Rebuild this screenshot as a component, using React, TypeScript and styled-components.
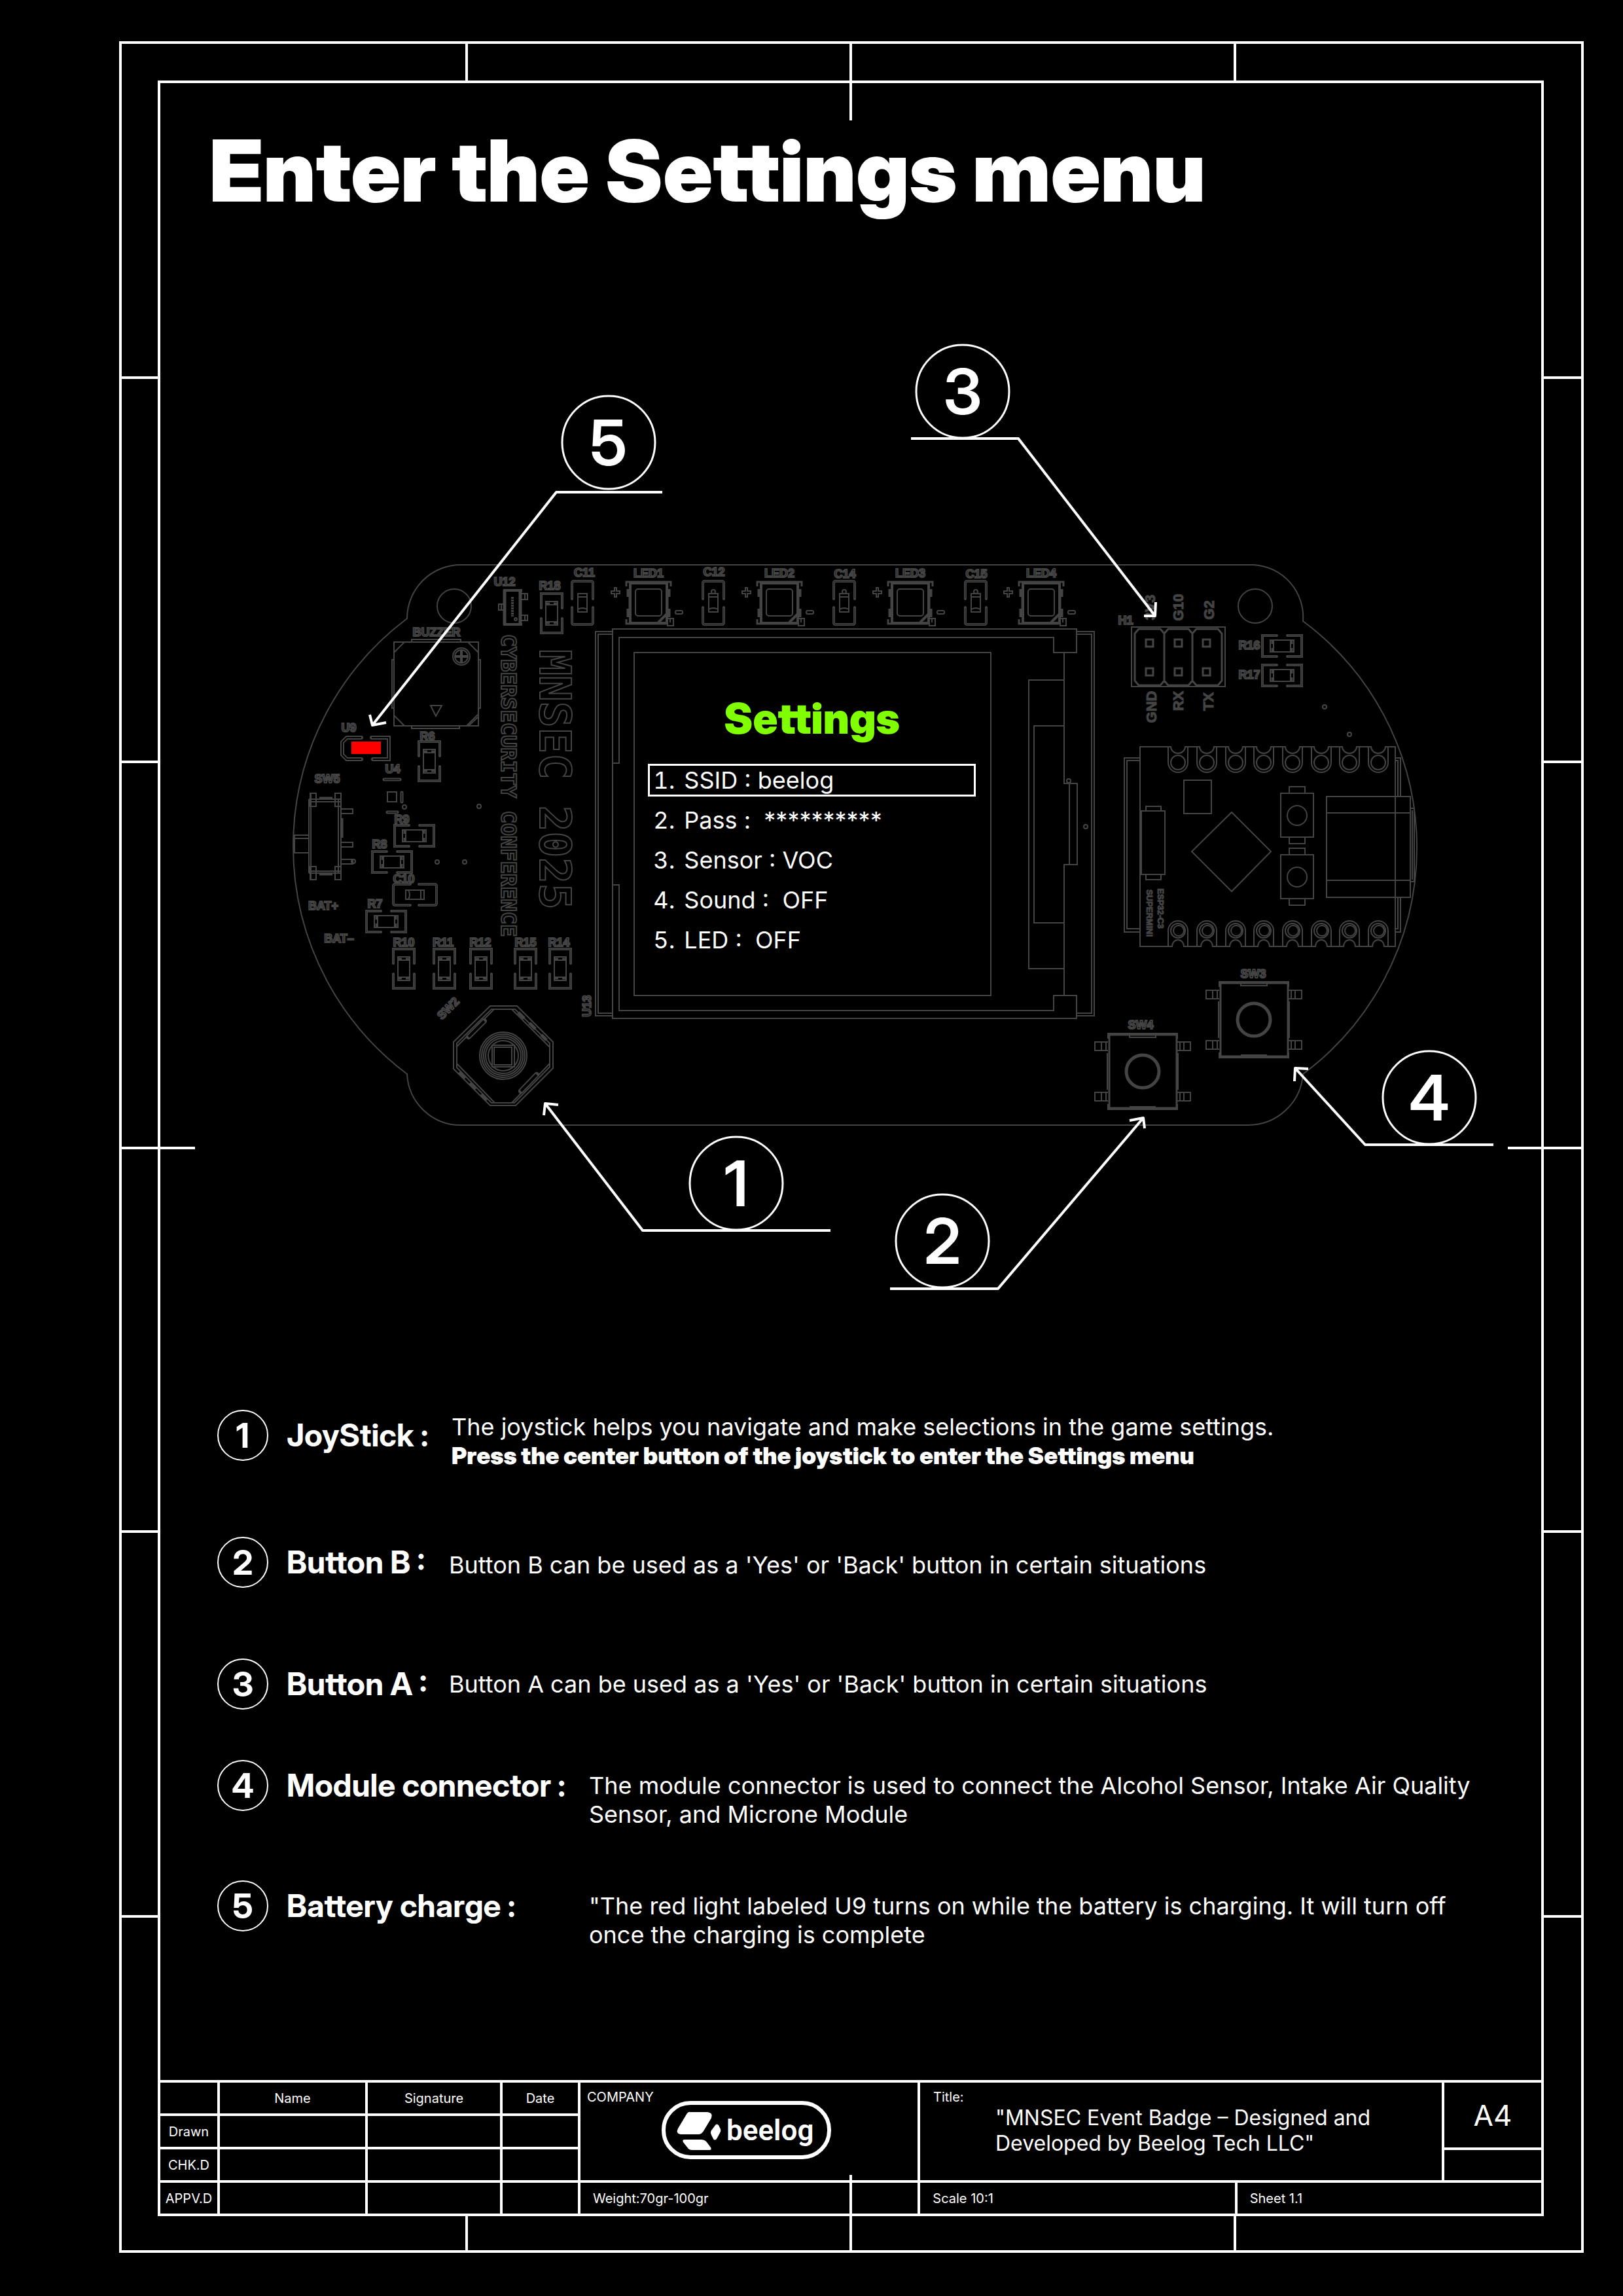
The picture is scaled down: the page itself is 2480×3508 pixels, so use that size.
import React from "react";
import styled, { createGlobalStyle, css } from "styled-components";

const LINE = "#ffffff";
const TRACE = "#444444";
const RULE = 4;
const DISPLAY = `"Inter Display", Inter, "Liberation Sans", sans-serif`;

const GlobalStyle = createGlobalStyle`
  *, *::before, *::after { box-sizing: border-box; }
  body {
    margin: 0;
    background: #000000;
    color: #ffffff;
    font-family: Inter, "Liberation Sans", sans-serif;
  }
  h1, h2, h3, p, ol, figure { margin: 0; padding: 0; }
  ol { list-style: none; }
`;

/* ---------- sheet frame ---------- */

const Sheet = styled.div`
  display: flex;
  min-height: 100vh;
  padding: 63px 60px 67px 182px;
`;

const Frame = styled.div`
  flex: 1;
  min-width: 0;
  display: grid;
  grid-template-columns: 55px minmax(0, 1fr) 57px;
  grid-template-rows: 56px 1fr 52px;
  border: ${RULE}px solid ${LINE};
`;

const HorizontalRuler = styled.div`
  grid-column: 1 / -1;
  display: grid;
  grid-template-columns: 529fr 586fr 587fr 527fr;
`;

const VerticalRuler = styled.div`
  display: grid;
  grid-template-rows: 456fr 587fr 589fr 586fr 588fr 456fr;
`;

type Side = "top" | "right" | "bottom" | "left";

const centreMark: Record<Side, ReturnType<typeof css>> = {
  top: css`top: 0; right: -4px; width: 4px; height: 117px;`,
  bottom: css`bottom: 0; right: -4px; width: 4px; height: 115px;`,
  left: css`left: 0; bottom: -4px; height: 4px; width: 112px;`,
  right: css`right: 0; bottom: -4px; height: 4px; width: 112px;`,
};

const Zone = styled.div<{ $side: Side; $centre?: boolean }>`
  position: relative;
  ${(p) => (p.$side === "top" || p.$side === "bottom" ? "border-right" : "border-bottom")}: ${RULE}px solid ${LINE};
  &:last-child { border: 0; }
  ${(p) =>
    p.$centre &&
    css`
      &::after {
        content: "";
        position: absolute;
        background: ${LINE};
        ${centreMark[p.$side]}
      }
    `}
`;

const Panel = styled.main`
  display: flex;
  flex-direction: column;
  border: ${RULE}px solid ${LINE};
`;

const Heading = styled.h1`
  padding: 56px 60px 0 75px;
  font-family: ${DISPLAY};
  font-size: 130px;
  line-height: 156px;
  font-weight: 900;
`;

/* ---------- board figure ---------- */

const Figure = styled.figure`
  position: relative;
  margin-top: 121px;
`;

const Drawing = styled.svg`
  display: block;
  width: 100%;
  height: auto;
`;

const Screen = styled.section`
  position: absolute;
  left: 34.33%;
  top: 34.42%;
  width: 25.84%;
  padding: 62px 24px 0 21px;
`;

const ScreenTitle = styled.h2`
  color: #80ff00;
  font-family: ${DISPLAY};
  font-size: 65px;
  line-height: 78px;
  font-weight: 900;
  text-align: center;
`;

const Menu = styled.ol`
  display: grid;
  gap: 11px;
  margin-top: 30px;
`;

const MenuItem = styled.li<{ $selected: boolean }>`
  display: grid;
  grid-template-columns: 38px 1fr;
  column-gap: 14px;
  height: 50px;
  align-items: center;
  border: 3px solid ${(p) => (p.$selected ? LINE : "transparent")};
  font-size: 36px;
  line-height: 44px;
  white-space: pre;
`;

const MenuNumber = styled.span`
  text-align: right;
  font-variant-numeric: tabular-nums;
`;

/* ---------- legend ---------- */

const Legend = styled.ol`
  display: flex;
  flex-direction: column;
  padding: 134px 80px 200px 87px;
`;

const LegendRow = styled.li<{ $after: number; $label: number }>`
  display: grid;
  grid-template-columns: 78px ${(p) => p.$label}px minmax(0, 1fr);
  column-gap: 28px;
  align-items: start;
  margin-bottom: ${(p) => p.$after}px;
`;

const Badge = styled.span`
  display: flex;
  align-items: center;
  justify-content: center;
  height: 78px;
  border: 2px solid ${LINE};
  border-radius: 50%;
  font-family: ${DISPLAY};
  font-size: 52px;
  font-weight: 700;
`;

const Term = styled.h3`
  font-family: ${DISPLAY};
  font-size: 48px;
  line-height: 78px;
  font-weight: 700;
  white-space: nowrap;
`;

const Description = styled.p<{ $top: number }>`
  padding-top: ${(p) => p.$top}px;
  font-size: 36px;
  line-height: 44px;
`;

const Strong = styled.strong`
  display: block;
  font-family: ${DISPLAY};
  font-weight: 900;
`;

/* ---------- title block ---------- */

const TitleBlock = styled.footer`
  display: grid;
  grid-template-columns: 642fr 519fr 801fr 148fr;
  margin-top: auto;
  border-top: ${RULE}px solid ${LINE};
  font-size: 20px;
  line-height: 24px;
`;

const Approvals = styled.table`
  grid-row: 1 / 3;
  width: 100%;
  table-layout: fixed;
  border-collapse: separate;
  border-spacing: 0;
  th, td {
    height: 51px;
    padding: 0;
    border-right: ${RULE}px solid ${LINE};
    border-bottom: ${RULE}px solid ${LINE};
    font-weight: 400;
    text-align: center;
  }
  tbody tr:last-child > * { height: 47px; border-bottom: 0; }
`;

const Col = styled.col<{ $w: number }>`
  width: ${(p) => p.$w}px;
`;

const Company = styled.div`
  display: flex;
  flex-direction: column;
  height: 153px;
  padding: 10px;
  border-right: ${RULE}px solid ${LINE};
  border-bottom: ${RULE}px solid ${LINE};
`;

const Logo = styled.svg`
  display: block;
  width: 259px;
  height: 89px;
  margin: -6px 0 0 114px;
`;

const LogoWord = styled.text`
  font-family: Roboto, "Liberation Sans", sans-serif;
  font-size: 44px;
  font-weight: 600;
  fill: #ffffff;
`;

const ProjectTitle = styled.div`
  height: 153px;
  padding: 10px 20px;
  border-right: ${RULE}px solid ${LINE};
  border-bottom: ${RULE}px solid ${LINE};
`;

const ProjectName = styled.p`
  width: 600px;
  margin-left: 95px;
  font-size: 32px;
  line-height: 39px;
`;

const Format = styled.div`
  display: grid;
  grid-template-rows: 1fr 46px;
  border-bottom: ${RULE}px solid ${LINE};
`;

const FormatName = styled.div`
  display: flex;
  align-items: center;
  justify-content: center;
  border-bottom: ${RULE}px solid ${LINE};
  font-size: 44px;
`;

const Facts = styled.div`
  grid-column: 2 / 5;
  display: grid;
  grid-template-columns: 519fr 484fr 464fr;
`;

const Fact = styled.div`
  display: flex;
  align-items: center;
  height: 47px;
  padding-left: 19px;
  border-right: ${RULE}px solid ${LINE};
  &:last-child { border-right: 0; }
`;

/* ---------- drawing parts ---------- */

type At = { x: number; y: number };

const Silk = styled.text`
  font-family: "Liberation Sans", Arial, sans-serif;
  font-size: 18px;
  font-weight: 700;
  text-anchor: middle;
  fill: #000000;
  stroke: ${TRACE};
  stroke-width: 2px;
`;

const SolidSilk = styled(Silk)<{ $size: number }>`
  font-size: ${(p) => p.$size}px;
  fill: ${TRACE};
  stroke-width: 1px;
`;

const BannerSilk = styled(Silk)<{ $size: number }>`
  font-family: "DejaVu Sans Mono", monospace;
  font-size: ${(p) => p.$size}px;
  stroke-width: 2px;
`;

const Name = ({ x, y, children }: At & { children: string }) => (
  <Silk x={x} y={y}>{children}</Silk>
);

const Turned = ({ x, y, angle, size, children }: At & { angle: number; size: number; children: string }) => (
  <SolidSilk $size={size} transform={`translate(${x} ${y}) rotate(${angle})`} y={size * 0.36}>
    {children}
  </SolidSilk>
);

/* A trace drawn as two parallel hairlines. */
const Double = ({ d, w = 6 }: { d: string; w?: number }) => (
  <>
    <path d={d} strokeWidth={w} strokeLinecap="round" />
    <path d={d} stroke="#000000" strokeWidth={w - 4} />
  </>
);

const Resistor = ({ x, y, flat }: At & { flat?: boolean }) => (
  <g transform={`translate(${x} ${y})${flat ? " rotate(90)" : ""}`}>
    <path d="M-16 -8V-30H16V-8 M-16 8V30H16V8" strokeWidth="4" strokeLinecap="round" />
    <path d="M-16 -9V-30H16V-9 M-16 9V30H16V9" strokeWidth="1" stroke="#2a2a2a" />
    <path d="M-9 -18H9V18H-9Z M-9 -13H9 M-9 13H9" />
    <path d="M-8 -15H-3 M3 -15H8 M-8 15H-3 M3 15H8" strokeWidth="3" />
  </g>
);

const Capacitor = ({ x, y, flat, dot }: At & { flat?: boolean; dot?: boolean }) => (
  <g transform={`translate(${x} ${y})${flat ? " rotate(90)" : ""}`}>
    <path d="M-16 -6V-30Q-16 -33 -13 -33H13Q16 -33 16 -30V-6 M-16 7V30Q-16 33 -13 33H13Q16 33 16 30V7" strokeWidth="4" strokeLinecap="round" />
    <path d="M-16 -7V-30Q-16 -33 -13 -33H13Q16 -33 16 -30V-7 M-16 8V30Q-16 33 -13 33H13Q16 33 16 30V8" strokeWidth="1" stroke="#1c1c1c" />
    <path d="M-7 -14H7V14H-7Z M-7 -9H7 M-7 10Q0 6 7 10" />
    {dot && <circle cx="0" cy="-17" r="3" />}
  </g>
);

const Led = ({ x, y, label }: At & { label: string }) => (
  <g transform={`translate(${x} ${y})`}>
    <rect x="-28" y="-30" width="56" height="61" strokeWidth="4" />
    <path d="M-34 -25V-32H34V-25 M-34 25V32H30 M-32 -21V-9 M32 -21V-9 M-32 9V22 M32 9V22 M-29 -21V22 M29 -21V22" strokeWidth="3" />
    <rect x="-20" y="-21" width="40" height="41" rx="4" />
    <path d="M15 30L28 17" strokeWidth="4" />
    <path d="M29 24H38V35H29V30 M33 24V30" />
    <path d="M-52 -23H-49V-18H-44V-14H-49V-9H-52V-14H-57V-18H-52Z" />
    <rect x="41" y="12" width="11" height="5" rx="2" />
    <Silk x="0" y="-39">{label}</Silk>
  </g>
);

const TactSwitch = ({ x, y }: At) => (
  <g transform={`translate(${x} ${y})`}>
    <rect x="-51" y="-56" width="103" height="112" strokeWidth="3" />
    <path d="M-53 -50V-58H53V-50 M-53 50V58H53V50 M-54 -28V28 M54 -28V28" />
    <circle r="25" strokeWidth="5" />
    <path d="M-20 -56V-52H20V-56 M-30 58H30" />
    <path d="M-20 55H20" strokeWidth="4" />
    {[-39, 38].map((dy) => (
      <path key={dy} d={`M-53 ${dy - 6}H-73V${dy + 7}H-53 M-63 ${dy - 6}V${dy + 7} M-56 ${dy - 6}V${dy + 7} M53 ${dy - 6}H73V${dy + 7}H53 M63 ${dy - 6}V${dy + 7} M57 ${dy - 6}V${dy + 7}`} />
    ))}
  </g>
);

const PushKey = ({ x, y }: At) => (
  <g transform={`translate(${x} ${y})`}>
    <rect x="-25" y="-34" width="50" height="67" />
    <path d="M-12 -34V-44H12V-34 M-12 33V43H12V33" />
    <circle r="15" />
  </g>
);

const Buzzer = () => (
  <g>
    <rect x="602" y="981" width="129" height="128" />
    <path d="M602 997L618 981 M715 981L731 997 M602 1093L618 1109 M716 1109L731 1095 M713 1109L731 1091" />
    <path d="M629 981V977H704V981 M602 1008H599V1082H602 M731 1008H734V1082H731 M629 1109V1113H702V1109" />
    <circle cx="705" cy="1003" r="13" />
    <circle cx="705" cy="1003" r="10" />
    <path d="M705 993V1013 M695 1003H715" strokeWidth="4" />
    <path d="M658 1078H675L666 1094Z" />
  </g>
);

const SlideSwitch = () => (
  <g>
    <path d="M472 1221V1334 M475 1212V1344 M517 1221V1334 M521 1212V1344 M472 1221H521 M472 1225H521 M472 1331H521 M472 1334H521" />
    <path d="M474 1212H483V1232H474Z M512 1212H521V1232H512Z M474 1324H483V1344H474Z M512 1324H521V1344H512Z" />
    <path d="M522 1236H539V1243H522 M522 1287H539V1294H522 M522 1313H539V1320H522" />
    <path d="M488 1219H508 M488 1336H508 M523 1250V1280" strokeWidth="3" />
    <circle cx="540" cy="1316" r="3" />
    <path d="M449 1276H473 M449 1281H473 M449 1303H473 M450 1276V1303" />
  </g>
);

const Joystick = () => (
  <g>
    <path d="M749 1537H790L845 1592V1632L788 1689H749L693 1633V1592Z" />
    <path d="M751 1542H787L840 1594V1630L786 1685H751L698 1631V1594Z" />
    <path d="M755 1542L697 1600 M782 1542L840 1600 M698 1625L756 1685 M840 1625L782 1685" />
    <Double d="M740 1560L716 1584 M820 1642L796 1667" w={8} />
    <path d="M792 1547L801 1556 M809 1563L818 1572 M827 1581L835 1589 M702 1638L711 1647 M718 1655L727 1664 M735 1672L744 1681" strokeWidth="5" />
    {[36, 33, 30, 27, 23].map((r) => (
      <circle key={r} cx="769" cy="1613" r={r} />
    ))}
    <rect x="752" y="1597" width="34" height="33" />
    <rect x="755" y="1600" width="27" height="27" />
  </g>
);

const DisplayModule = () => (
  <g>
    <path d="M936 965H910V1552H936 M936 969H914V1548H936" />
    <path d="M1645 965H1672V1552H1645 M1645 969H1668V1548H1645" />
    <path d="M936 961H1645V997H1610V974H946V1166H936Z" />
    <path d="M936 1166V1556H1645V1521H1610V1544H946V1352H936" />
    <rect x="969" y="997" width="545" height="524" />
    <path d="M1626 997V1197H1646V1321H1626V1521 M1634 1197V1321" />
    <path d="M1626 1039H1572V1480H1626 M1626 1109H1580V1410H1626" />
    <circle cx="1633" cy="1193" r="3" />
    <circle cx="1659" cy="1263" r="3" />
  </g>
);

const Header = () => (
  <g>
    <rect x="1729" y="958" width="143" height="91" />
    <path d="M1734 968L1740 961H1773L1779 968L1785 961H1816L1822 968L1828 961H1861L1867 968V1040L1861 1047H1828L1822 1040L1816 1047H1785L1779 1040L1773 1047H1740L1734 1040Z M1779 968V1040 M1822 968V1040" strokeWidth="3" />
    {[1756, 1800, 1843].map((x) =>
      [982, 1026].map((y) => <rect key={`${x}-${y}`} x={x - 5} y={y - 5} width="11" height="11" strokeWidth="3" />)
    )}
  </g>
);

const PADS = [1800, 1844, 1888, 1931, 1975, 2019, 2062, 2106];

const Controller = () => (
  <g>
    <path d={`M1742 1141${PADS.map((x) => `H${x - 11}A11 10 0 0 0 ${x + 11} 1141`).join("")}H2132V1446${[...PADS].reverse().map((x) => `H${x + 9}A9 10 0 0 0 ${x - 9} 1446`).join("")}H1742Z`} />
    {PADS.map((x) => (
      <g key={x}>
        <path d={`M${x - 15} 1141V1165A15 15 0 0 0 ${x + 15} 1165V1141 M${x - 15} 1446V1422A15 15 0 0 1 ${x + 15} 1422V1446`} />
        <circle cx={x} cy="1165" r="11" />
        <circle cx={x} cy="1422" r="11" />
        <circle cx={x + 1} cy="1422" r="8" />
      </g>
    ))}
    <path d="M1742 1158H1718V1424H1742 M1742 1162H1722V1419H1742" />
    <path d="M2132 1158H2140V1217 M2132 1162H2136V1217 M2140 1371V1424H2132 M2136 1371V1419H2132" />
    <rect x="1809" y="1192" width="42" height="51" />
    <path d="M1882 1241L1942 1301L1882 1362L1821 1301Z" />
    <PushKey x={1982} y={1246} />
    <PushKey x={1982} y={1340} />
    <path d="M2027 1217H2155V1371H2027Z M2027 1242H2155 M2027 1345H2155 M2155 1235H2161V1347H2155 M2158 1238V1344" />
    <path d="M1744 1239H1780V1336H1744Z M1751 1239V1232H1774V1239 M1751 1336V1344H1774V1336" />
  </g>
);

const CalloutNumber = styled.text`
  font-family: ${DISPLAY};
  font-size: 96px;
  font-weight: 600;
  text-anchor: middle;
  fill: ${LINE};
  stroke: none;
`;

type CalloutProps = At & { n: number; from: number; elbow: number[]; tip: number[]; wings: number[][] };

const Callout = ({ n, x, y, from, elbow, tip, wings }: CalloutProps) => (
  <g>
    <path
      d={`M${from} ${elbow[1]}H${elbow[0]}L${tip.join(" ")} M${wings[0].join(" ")}L${tip.join(" ")}L${wings[1].join(" ")}`}
      stroke={LINE}
      strokeWidth="4"
      strokeLinejoin="round"
    />
    <circle cx={x} cy={y} r="71" stroke={LINE} strokeWidth="3" />
    <CalloutNumber x={x} y={y + 35}>{n}</CalloutNumber>
  </g>
);

const Board = () => (
  <Drawing viewBox="245 460 2110 1560" fill="none" stroke={TRACE} strokeWidth="2" role="img" aria-label="MNSEC event badge board">
    <path d="M704 863H1915A80 80 0 0 1 1991 949A431 431 0 0 1 1991 1641A84 84 0 0 1 1907 1719H704A82 82 0 0 1 622 1641A435 435 0 0 1 622 945A82 82 0 0 1 704 863Z" />
    <circle cx="694" cy="926" r="26" />
    <circle cx="1918" cy="926" r="26" />

    <Buzzer />
    <Name x={667} y={972}>BUZZER</Name>
    <Name x={771} y={895}>U12</Name>
    <path d="M769 902H798 M769 954H798" strokeWidth="4" />
    <path d="M771 901V955 M795 901V955" strokeWidth="5" />
    <path d="M797 907H806V916H797 M802 907V916 M797 940H806V948H797 M802 940V948 M770 923H762V932H770 M766 923V932" />
    <path d="M783 912V942" strokeWidth="4" strokeDasharray="3 1" />
    <circle cx="788" cy="946" r="2" />

    <Name x={840} y={901}>R18</Name>
    <Resistor x={843} y={937} />
    <Name x={893} y={881}>C11</Name>
    <Capacitor x={890} y={921} />

    <Led x={991} y={921} label="LED1" />
    <Led x={1191} y={921} label="LED2" />
    <Led x={1391} y={921} label="LED3" />
    <Led x={1591} y={921} label="LED4" />
    <Name x={1091} y={880}>C12</Name>
    <Capacitor x={1090} y={921} dot />
    <Name x={1291} y={883}>C14</Name>
    <Capacitor x={1290} y={921} dot />
    <Name x={1492} y={883}>C15</Name>
    <Capacitor x={1491} y={921} dot />

    <Name x={533} y={1118}>U9</Name>
    <Double d="M552 1127H530L523 1134V1153L530 1160H552 M568 1127H594V1160H570" />
    <rect x="537" y="1133" width="45" height="19" fill="#ff0000" stroke="none" />

    <Name x={653} y={1131}>R6</Name>
    <Resistor x={656} y={1163} />
    <Name x={600} y={1181}>U4</Name>
    <Double d="M587 1191H611 M614 1211V1225 M592 1241H607" w={5} />
    <rect x="592" y="1210" width="14" height="15" />
    <circle cx="618" cy="1233" r="3" />

    <Name x={500} y={1196}>SW5</Name>
    <SlideSwitch />
    <Name x={614} y={1258}>R9</Name>
    <Resistor x={633} y={1277} flat />
    <Name x={580} y={1296}>R8</Name>
    <Resistor x={599} y={1317} flat />
    <Name x={617} y={1349}>C10</Name>
    <Capacitor x={634} y={1367} flat />
    <Name x={573} y={1387}>R7</Name>
    <Resistor x={590} y={1408} flat />
    <Name x={494} y={1390}>BAT+</Name>
    <Name x={518} y={1440}>BAT–</Name>
    <circle cx="732" cy="1232" r="3" />
    <circle cx="668" cy="1317" r="3" />
    <circle cx="710" cy="1317" r="3" />

    <BannerSilk $size={32} transform="translate(766 1200) rotate(90)">CYBERSECURITY CONFERENCE</BannerSilk>
    <BannerSilk $size={66} transform="translate(825 1191) rotate(90)">MNSEC 2025</BannerSilk>

    <Name x={617} y={1446}>R10</Name>
    <Resistor x={617} y={1480} />
    <Name x={677} y={1446}>R11</Name>
    <Resistor x={679} y={1480} />
    <Name x={734} y={1446}>R12</Name>
    <Resistor x={735} y={1480} />
    <Name x={803} y={1446}>R15</Name>
    <Resistor x={803} y={1480} />
    <Name x={854} y={1446}>R14</Name>
    <Resistor x={856} y={1480} />
    <Silk transform="translate(689 1545) rotate(-45)">SW2</Silk>
    <Silk transform="translate(903 1537) rotate(-90)">U13</Silk>
    <Joystick />

    <DisplayModule />

    <Name x={1720} y={954}>H1</Name>
    <Header />
    <Turned x={1757} y={928} angle={-90} size={22}>3V3</Turned>
    <Turned x={1800} y={928} angle={-90} size={22}>G10</Turned>
    <Turned x={1847} y={932} angle={-90} size={22}>G2</Turned>
    <Turned x={1759} y={1080} angle={-90} size={22}>GND</Turned>
    <Turned x={1800} y={1071} angle={-90} size={22}>RX</Turned>
    <Turned x={1846} y={1072} angle={-90} size={22}>TX</Turned>
    <Name x={1909} y={992}>R16</Name>
    <Resistor x={1959} y={987} flat />
    <Name x={1909} y={1037}>R17</Name>
    <Resistor x={1959} y={1032} flat />
    <circle cx="2024" cy="1080" r="3" />
    <circle cx="2062" cy="1122" r="3" />

    <Controller />
    <Turned x={1757} y={1395} angle={90} size={13}>SUPERMINI</Turned>
    <Turned x={1774} y={1388} angle={90} size={13}>ESP32-C3</Turned>

    <Name x={1915} y={1494}>SW3</Name>
    <TactSwitch x={1916} y={1558} />
    <Name x={1743} y={1572}>SW4</Name>
    <TactSwitch x={1746} y={1637} />

    <Callout n={1} x={1125} y={1808} from={1269} elbow={[982, 1880]} tip={[833, 1686]} wings={[[853, 1688], [831, 1704]]} />
    <Callout n={2} x={1440} y={1896} from={1360} elbow={[1525, 1969]} tip={[1747, 1708]} wings={[[1726, 1712], [1749, 1724]]} />
    <Callout n={3} x={1471} y={598} from={1392} elbow={[1556, 670]} tip={[1765, 941]} wings={[[1766, 920], [1748, 941]]} />
    <Callout n={4} x={2184} y={1677} from={2282} elbow={[2086, 1749]} tip={[1979, 1632]} wings={[[1999, 1633], [1978, 1652]]} />
    <Callout n={5} x={930} y={676} from={1012} elbow={[850, 752]} tip={[569, 1108]} wings={[[565, 1092], [590, 1104]]} />
  </Drawing>
);

/* ---------- content ---------- */

const settings = ["SSID : beelog", "Pass :  **********", "Sensor : VOC", "Sound :  OFF", "LED :  OFF"];

type Entry = { term: string; text: React.ReactNode; label: number; top: number; after: number };

const legend: Entry[] = [
  {
    term: "JoyStick :",
    text: (
      <>
        The joystick helps you navigate and make selections in the game settings.
        <Strong>Press the center button of the joystick to enter the Settings menu</Strong>
      </>
    ),
    label: 224,
    top: 4,
    after: 102,
  },
  { term: "Button B :", text: "Button B can be used as a 'Yes' or 'Back' button in certain situations", label: 220, top: 21, after: 108 },
  { term: "Button A :", text: "Button A can be used as a 'Yes' or 'Back' button in certain situations", label: 220, top: 17, after: 77 },
  {
    term: "Module connector :",
    text: "The module connector is used to connect the Alcohol Sensor, Intake Air Quality Sensor, and Microne Module",
    label: 434,
    top: 17,
    after: 79,
  },
  {
    term: "Battery charge :",
    text: "\"The red light labeled U9 turns on while the battery is charging. It will turn off once the charging is complete",
    label: 434,
    top: 17,
    after: 0,
  },
];

const zones = (side: Side, count: number, centre: number) =>
  Array.from({ length: count }, (_, i) => <Zone key={i} $side={side} $centre={i === centre} />);

export default function App() {
  return (
    <>
      <GlobalStyle />
      <Sheet>
        <Frame>
          <HorizontalRuler>{zones("top", 4, 1)}</HorizontalRuler>
          <VerticalRuler>{zones("left", 6, 2)}</VerticalRuler>
          <Panel>
            <Heading>Enter the Settings menu</Heading>
            <Figure>
              <Board />
              <Screen>
                <ScreenTitle>Settings</ScreenTitle>
                <Menu>
                  {settings.map((item, i) => (
                    <MenuItem key={item} $selected={i === 0} aria-current={i === 0 ? "true" : undefined}>
                      <MenuNumber>{i + 1}.</MenuNumber>
                      <span>{item}</span>
                    </MenuItem>
                  ))}
                </Menu>
              </Screen>
            </Figure>
            <Legend>
              {legend.map((entry, i) => (
                <LegendRow key={entry.term} $after={entry.after} $label={entry.label}>
                  <Badge>{i + 1}</Badge>
                  <Term>{entry.term}</Term>
                  <Description $top={entry.top}>{entry.text}</Description>
                </LegendRow>
              ))}
            </Legend>
            <TitleBlock>
              <Approvals>
                <colgroup>
                  <Col $w={91} />
                  <Col $w={226} />
                  <Col $w={206} />
                  <Col $w={119} />
                </colgroup>
                <thead>
                  <tr>
                    <td />
                    <th scope="col">Name</th>
                    <th scope="col">Signature</th>
                    <th scope="col">Date</th>
                  </tr>
                </thead>
                <tbody>
                  {["Drawn", "CHK.D", "APPV.D"].map((row) => (
                    <tr key={row}>
                      <th scope="row">{row}</th>
                      <td />
                      <td />
                      <td />
                    </tr>
                  ))}
                </tbody>
              </Approvals>
              <Company>
                <span>COMPANY</span>
                <Logo viewBox="0 0 259 89" role="img" aria-label="beelog">
                  <rect x="3" y="3" width="253" height="83" rx="41" fill="none" stroke="#ffffff" strokeWidth="6" />
                  <path
                    d="M44 17H70Q79 18 76 26L64 46Q61 51 56 51H29Q21 50 25 42L37 22Q40 16 44 17Z M35 59H60Q66 59 69 63L75 71Q77 75 73 75H47Q42 75 40 72L33 63Q31 59 35 59Z M82 37Q84 34 87 37L90 43Q91 46 89 49L84 58Q81 61 79 58L76 52Q74 48 76 45Z"
                    fill="#ffffff"
                  />
                  <LogoWord x="99" y="60">beelog</LogoWord>
                </Logo>
              </Company>
              <ProjectTitle>
                <span>Title:</span>
                <ProjectName>"MNSEC Event Badge – Designed and Developed by Beelog Tech LLC"</ProjectName>
              </ProjectTitle>
              <Format>
                <FormatName>A4</FormatName>
              </Format>
              <Facts>
                <Fact>Weight:70gr-100gr</Fact>
                <Fact>Scale 10:1</Fact>
                <Fact>Sheet 1.1</Fact>
              </Facts>
            </TitleBlock>
          </Panel>
          <VerticalRuler>{zones("right", 6, 2)}</VerticalRuler>
          <HorizontalRuler>{zones("bottom", 4, 1)}</HorizontalRuler>
        </Frame>
      </Sheet>
    </>
  );
}
